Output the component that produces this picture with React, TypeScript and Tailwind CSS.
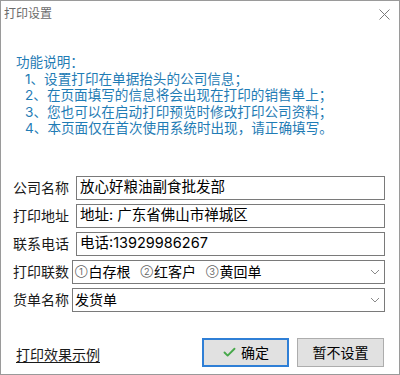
import { Check } from "lucide-react";

const font = { fontFamily: 'Inter, "Noto Sans CJK SC", "Noto Sans", sans-serif' };

const notes = [
  "1、设置打印在单据抬头的公司信息；",
  "2、在页面填写的信息将会出现在打印的销售单上；",
  "3、您也可以在启动打印预览时修改打印公司资料；",
  "4、本页面仅在首次使用系统时出现，请正确填写。",
];

function Chevron() {
  return (
    <svg width="10" height="6" viewBox="0 0 10 6" className="shrink-0">
      <path d="M1 1 L5 5 L9 1" fill="none" stroke="#8a8a8a" strokeWidth="1" />
    </svg>
  );
}

function TextRow({ label, children }: { label: string; children: React.ReactNode }) {
  return (
    <div className="flex items-center h-[24px]">
      <div className="w-[75px] pl-[12px] text-[14px] text-[#1a1a1a] leading-none">{label}</div>
      <div className="w-[309px] h-[24px] border border-[#7a7a7a] flex items-center pl-[3px] text-[14.5px] text-black leading-none">
        {children}
      </div>
    </div>
  );
}

function ComboRow({ label, children }: { label: string; children: React.ReactNode }) {
  return (
    <div className="flex items-center h-[24px]">
      <div className="w-[71px] pl-[12px] text-[14px] text-[#1a1a1a] leading-none">{label}</div>
      <div className="w-[313px] h-[24px] border border-[#7a7a7a] flex items-center pl-[2px] pr-[4px] text-[14px] text-black leading-none">
        <div className="flex-1 flex items-center">{children}</div>
        <Chevron />
      </div>
    </div>
  );
}

function Part({ n, text }: { n: string; text: string }) {
  return (
    <span className="flex items-center mr-[10px]">
      <span className="text-[9px] text-[#666] mr-[1px]">{n}</span>
      {text}
    </span>
  );
}

export default function App() {
  return (
    <div className="w-[400px] h-[375px] border border-[#9a9a9a] bg-white flex flex-col" style={font}>
      <div className="h-[26px] flex items-center justify-between pl-[3px] pr-[9px]">
        <span className="text-[12px] text-[#6b6b6b]">打印设置</span>
        <svg width="11" height="11" viewBox="0 0 11 11">
          <path d="M0.5 0.5 L10.5 10.5 M10.5 0.5 L0.5 10.5" stroke="#7a7a7a" strokeWidth="1" />
        </svg>
      </div>

      <div className="mt-[27px] pl-[15px] text-[13.6px] leading-[16.5px] text-[#1f7cb5]">
        <div>功能说明：</div>
        {notes.map((t) => (
          <div key={t} className="pl-[9px]">
            {t}
          </div>
        ))}
      </div>

      <div className="mt-[39px] flex flex-col gap-[4px]">
        <TextRow label="公司名称">放心好粮油副食批发部</TextRow>
        <TextRow label="打印地址">
          地址:<span className="ml-[4px]">广东省佛山市禅城区</span>
        </TextRow>
        <TextRow label="联系电话">电话:13929986267</TextRow>
        <ComboRow label="打印联数">
          <Part n="①" text="白存根" />
          <Part n="②" text="红客户" />
          <Part n="③" text="黄回单" />
        </ComboRow>
        <ComboRow label="货单名称">
          <span>发货单</span>
        </ComboRow>
      </div>

      <div className="mt-[26px] flex items-end pl-[15px] pr-[15px]">
        <span className="text-[14px] text-[#1a1a1a] underline underline-offset-2 mb-[2px]">打印效果示例</span>
        <div className="flex-1" />
        <button className="w-[87px] h-[29px] border-2 border-[#2f7fd6] bg-[#e1e1e1] flex items-center justify-center gap-[4px] text-[14px] text-black">
          <Check size={15} strokeWidth={3} color="#46a84a" />
          确定
        </button>
        <button className="ml-[8px] w-[87px] h-[29px] border border-[#adadad] bg-[#e1e1e1] flex items-center justify-center text-[14px] text-black">
          暂不设置
        </button>
      </div>
    </div>
  );
}
